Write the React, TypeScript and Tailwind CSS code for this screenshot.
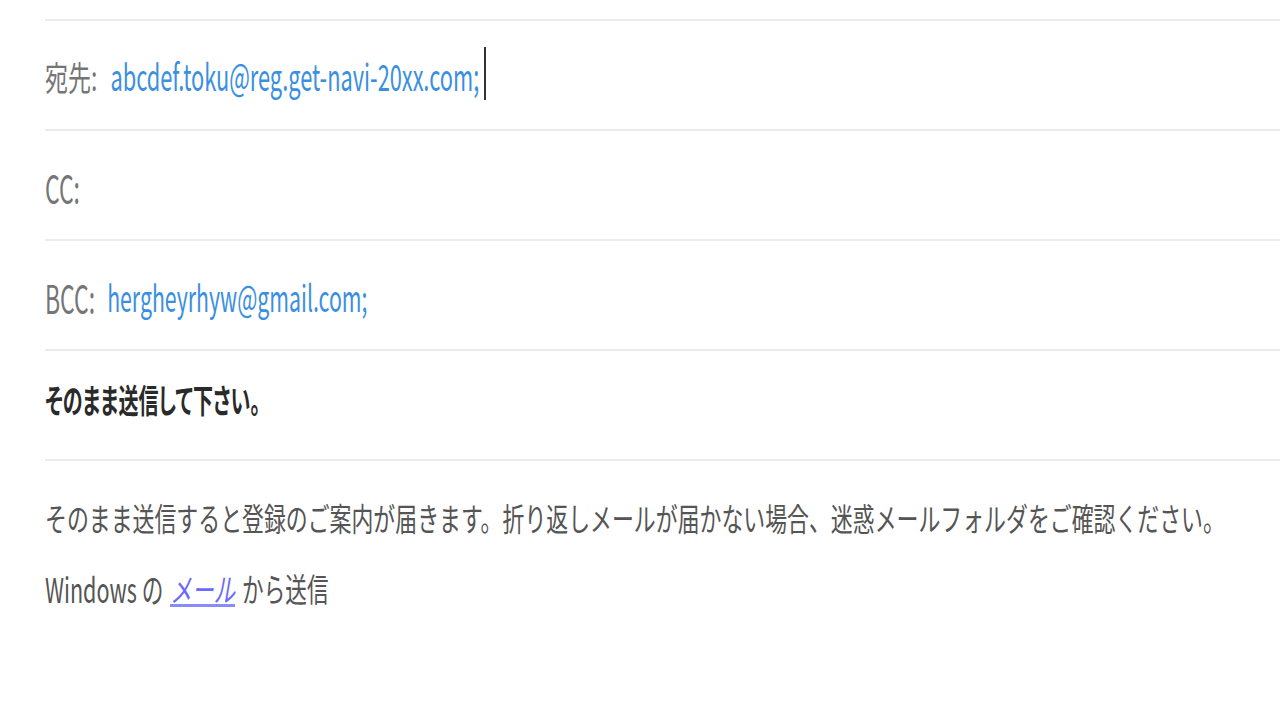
import React from "react";

const font = { fontFamily: '"Noto Sans CJK JP", "Noto Sans", sans-serif' };

const Row = ({ children, className = "" }: { children: React.ReactNode; className?: string }) => (
  <div className={"h-[110px] border-t-2 border-[#ebebeb] flex items-center " + className}>{children}</div>
);

export default function App() {
  return (
    <div className="min-h-screen bg-white pl-[45px] pt-[19px] overflow-hidden" style={font}>
      <Row className="pt-[2px]">
        <span className="inline-block scale-y-[1.5] text-[23px] text-[#757575]">宛先:</span>
        <span className="inline-block scale-y-[1.7] ml-[13px] text-[21.8px] text-[#3b8fe0]">abcdef.toku@reg.get-navi-20xx.com;</span>
        <span className="ml-[5px] inline-block w-[2px] h-[53px] bg-[#333] -mt-[6px]"></span>
      </Row>
      <Row className="pt-[4px]">
        <span className="inline-block scale-y-[1.7] text-[23px] text-[#757575]">CC:</span>
      </Row>
      <Row className="pt-[4px]">
        <span className="inline-block scale-y-[1.7] text-[23px] text-[#757575]">BCC:</span>
        <span className="inline-block scale-y-[1.7] ml-[12px] text-[21.3px] text-[#3b8fe0]">hergheyrhyw@gmail.com;</span>
      </Row>
      <Row className="pb-[10px]">
        <span className="inline-block scale-y-[1.65] text-[20px] font-bold text-[#2a2a2a] [font-feature-settings:'palt']">
          そのまま送信して下さい。
        </span>
      </Row>
      <div className="border-t-2 border-[#ebebeb] pt-[46px] text-[#555]">
        <p className="scale-y-[1.45] origin-left text-[21.9px] leading-none whitespace-nowrap">
          そのまま送信すると登録のご案内が届きます。折り返しメールが届かない場合、迷惑メールフォルダをご確認ください。
        </p>
        <p className="mt-[48px] text-[21.6px] leading-none whitespace-nowrap flex items-center">
          <span className="inline-block scale-y-[1.6]">Windows の</span>
          <span className="inline-block ml-[7px] text-[#6a6aff] border-b-[3px] border-[#8a8aff] pb-[5px] -mb-[8px]">
            <span className="inline-block scale-y-[1.5] italic">メール</span>
          </span>
          <span className="inline-block ml-[7px] scale-y-[1.5]">から送信</span>
        </p>
      </div>
    </div>
  );
}
